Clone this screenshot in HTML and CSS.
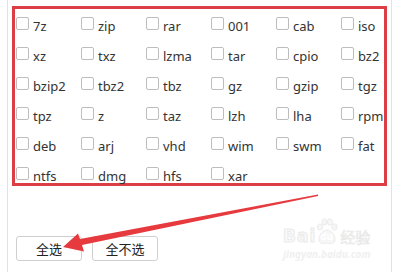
FILE: index.html
```html
<!DOCTYPE html>
<html lang="zh-CN">
<head>
  <meta charset="UTF-8" />
  <meta name="viewport" content="width=device-width, initial-scale=1" />
  <title>格式选择</title>
  <link rel="stylesheet" href="styles.css">
</head>
<body>
  <div class="panel">
    <div class="formats">
      <label class="item"><input type="checkbox"><span>7z</span></label>
      <label class="item"><input type="checkbox"><span>zip</span></label>
      <label class="item"><input type="checkbox"><span>rar</span></label>
      <label class="item"><input type="checkbox"><span>001</span></label>
      <label class="item"><input type="checkbox"><span>cab</span></label>
      <label class="item"><input type="checkbox"><span>iso</span></label>
      <label class="item"><input type="checkbox"><span>xz</span></label>
      <label class="item"><input type="checkbox"><span>txz</span></label>
      <label class="item"><input type="checkbox"><span>lzma</span></label>
      <label class="item"><input type="checkbox"><span>tar</span></label>
      <label class="item"><input type="checkbox"><span>cpio</span></label>
      <label class="item"><input type="checkbox"><span>bz2</span></label>
      <label class="item"><input type="checkbox"><span>bzip2</span></label>
      <label class="item"><input type="checkbox"><span>tbz2</span></label>
      <label class="item"><input type="checkbox"><span>tbz</span></label>
      <label class="item"><input type="checkbox"><span>gz</span></label>
      <label class="item"><input type="checkbox"><span>gzip</span></label>
      <label class="item"><input type="checkbox"><span>tgz</span></label>
      <label class="item"><input type="checkbox"><span>tpz</span></label>
      <label class="item"><input type="checkbox"><span>z</span></label>
      <label class="item"><input type="checkbox"><span>taz</span></label>
      <label class="item"><input type="checkbox"><span>lzh</span></label>
      <label class="item"><input type="checkbox"><span>lha</span></label>
      <label class="item"><input type="checkbox"><span>rpm</span></label>
      <label class="item"><input type="checkbox"><span>deb</span></label>
      <label class="item"><input type="checkbox"><span>arj</span></label>
      <label class="item"><input type="checkbox"><span>vhd</span></label>
      <label class="item"><input type="checkbox"><span>wim</span></label>
      <label class="item"><input type="checkbox"><span>swm</span></label>
      <label class="item"><input type="checkbox"><span>fat</span></label>
      <label class="item"><input type="checkbox"><span>ntfs</span></label>
      <label class="item"><input type="checkbox"><span>dmg</span></label>
      <label class="item"><input type="checkbox"><span>hfs</span></label>
      <label class="item"><input type="checkbox"><span>xar</span></label>
    </div>

    <div class="actions">
      <button class="btn" onclick="setAll(true)">全选</button>
      <button class="btn" onclick="setAll(false)">全不选</button>
    </div>
  </div>

  <!-- annotation arrow drawn over the page -->
  <svg class="arrow" width="400" height="272" viewBox="0 0 400 272">
    <polygon points="318,194.5 318,196 82,245 84,251.5 63,247 78,233.5 80,239" fill="#e63a3f" />
  </svg>

  <div class="watermark">
    <div class="wm-top">
      <span class="wm-bai">Bai</span>
      <span class="wm-paw">
        <svg width="22" height="27" viewBox="0 0 22 27">
          <ellipse cx="4" cy="9" rx="2.6" ry="3.2" />
          <ellipse cx="8.5" cy="4" rx="2.6" ry="3.2" />
          <ellipse cx="14" cy="4" rx="2.6" ry="3.2" />
          <ellipse cx="18.5" cy="9" rx="2.6" ry="3.2" />
          <path d="M3 22 C3 15 8 12 11 12 C14 12 19 15 19 22 C19 26 15 26 11 25 C7 26 3 26 3 22 Z" />
        </svg>
        <span class="wm-du">du</span>
      </span>
      <span class="wm-jy">经验</span>
    </div>
    <div class="wm-url">jingyan.baidu.com</div>
  </div>

  <script>
    function setAll(state) {
      document.querySelectorAll(".formats input").forEach(cb => cb.checked = state);
    }
  </script>
</body>
</html>
```

FILE: styles.css
```css
body {
  margin: 0;
  background: #fff;
  font-family: 'Noto Sans', 'Noto Sans CJK SC', sans-serif;
  color: #333;
  overflow: hidden;
}
.panel {
  margin-left: 7px;
  width: 383px;
  height: 272px;
  padding-top: 6px;
  border-left: 1px solid #e2e2e2;
  border-right: 1px solid #e2e2e2;
}
.formats {
  margin-left: 4px;
  width: 375px;
  height: 180px;
  box-sizing: border-box;
  border: 3px solid #dc3e45;
  padding: 8px 0 0 1px;
  display: grid;
  grid-template-columns: repeat(5, 65px) 1fr;
  grid-auto-rows: 30px;
}
.item {
  display: flex;
  align-items: flex-start;
  gap: 5px;
  font-size: 13px;
  line-height: 16px;
  cursor: pointer;
}
.item input {
  appearance: none;
  -webkit-appearance: none;
  margin: 0;
  width: 13px;
  height: 13px;
  border: 1px solid #bdbdbd;
  border-radius: 2px;
  background: #fff;
  flex-shrink: 0;
}
.item input:checked {
  background: #3b8beb;
  border-color: #3b8beb;
}
.item span {
  margin-top: 1px;
  margin-left: -1px;
  white-space: nowrap;
}
.actions {
  display: flex;
  gap: 10px;
  margin: 50px 0 0 8px;
}
.btn {
  width: 66px;
  height: 25px;
  padding: 0;
  background: #fff;
  border: 1px solid #cfcfcf;
  border-radius: 3px;
  font-family: 'Noto Sans CJK SC', sans-serif;
  font-size: 13px;
  color: #222;
  cursor: pointer;
}
.arrow {
  position: absolute;
  top: 0;
  left: 0;
  pointer-events: none;
}
.watermark {
  position: absolute;
  left: 283px;
  top: 216px;
  pointer-events: none;
}
.wm-top {
  display: flex;
  align-items: flex-end;
  height: 29px;
}
.wm-bai {
  font-family: 'DejaVu Sans', sans-serif;
  font-weight: bold;
  font-size: 17px;
  line-height: 17px;
  letter-spacing: 1px;
  color: #fafafa;
  -webkit-text-stroke: 1px #ebebeb;
}
.wm-paw {
  position: relative;
  width: 22px;
  height: 27px;
}
.wm-paw svg {
  fill: #f6f6f6;
  stroke: #e9e9e9;
  stroke-width: 0.8;
}
.wm-du {
  position: absolute;
  left: 4px;
  top: 12px;
  font-size: 10px;
  line-height: 12px;
  font-weight: bold;
  color: #fff;
}
.wm-jy {
  font-family: 'Noto Sans CJK SC', sans-serif;
  font-size: 15px;
  line-height: 17px;
  margin-left: 2px;
  color: #f6f6f6;
  -webkit-text-stroke: 0.6px #e6e6e6;
}
.wm-url {
  font-size: 10px;
  line-height: 12px;
  margin-top: 3px;
  font-style: italic;
  font-weight: bold;
  color: #f0f0f0;
}
```
